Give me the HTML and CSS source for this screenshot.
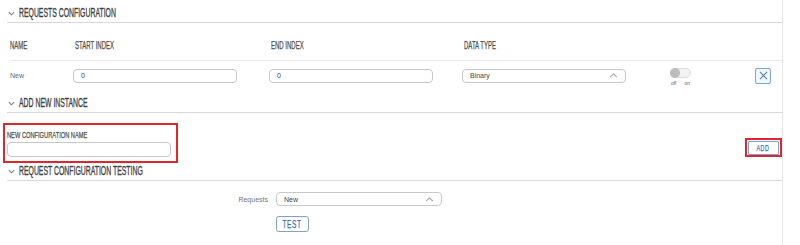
FILE: index.html
```html
<!DOCTYPE html>
<html lang="en">
<head>
    <meta charset="UTF-8">
    <title>Requests configuration</title>
    <link rel="stylesheet" href="styles.css">
</head>
<body>
    <div class="page">
        <div class="section-title">
            <svg class="chev" viewBox="0 0 8 5" width="7" height="5"><path d="M1 1l3 3 3-3" fill="none" stroke="#777" stroke-width="1.2"/></svg>
            <span class="cond">REQUESTS CONFIGURATION</span>
        </div>

        <div class="table">
            <div class="row head">
                <div class="cell first"><span class="cond">NAME</span></div>
                <div class="cell"><span class="cond">START INDEX</span></div>
                <div class="cell"><span class="cond">END INDEX</span></div>
                <div class="cell"><span class="cond">DATA TYPE</span></div>
                <div class="cell"></div>
                <div class="cell"></div>
            </div>
            <div class="row body">
                <div class="cell first name">New</div>
                <div class="cell"><input class="field" type="text" value="0"></div>
                <div class="cell"><input class="field" type="text" value="0"></div>
                <div class="cell">
                    <div class="select">
                        <span>Binary</span>
                        <svg viewBox="0 0 10 6" width="9" height="5"><path d="M1 5l4-4 4 4" fill="none" stroke="#aaa" stroke-width="1.3"/></svg>
                    </div>
                </div>
                <div class="cell">
                    <div class="toggle">
                        <div class="track"><div class="knob"></div></div>
                        <div class="toggle-labels"><span>off</span><span>on</span></div>
                    </div>
                </div>
                <div class="cell">
                    <button class="remove">
                        <svg viewBox="0 0 10 10" width="9" height="9"><path d="M1 1l8 8M9 1l-8 8" stroke="#4f84bd" stroke-width="1.2"/></svg>
                    </button>
                </div>
            </div>
        </div>

        <div class="section-title">
            <svg class="chev" viewBox="0 0 8 5" width="7" height="5"><path d="M1 1l3 3 3-3" fill="none" stroke="#777" stroke-width="1.2"/></svg>
            <span class="cond">ADD NEW INSTANCE</span>
        </div>

        <div class="add-row">
            <div class="new-name">
                <label for="newName"><span class="cond">NEW CONFIGURATION NAME</span></label>
                <input class="field" type="text" id="newName">
            </div>
            <div class="add-wrap">
                <button class="btn"><span class="cond mid">ADD</span></button>
            </div>
        </div>

        <div class="section-title">
            <svg class="chev" viewBox="0 0 8 5" width="7" height="5"><path d="M1 1l3 3 3-3" fill="none" stroke="#777" stroke-width="1.2"/></svg>
            <span class="cond">REQUEST CONFIGURATION TESTING</span>
        </div>

        <div class="test">
            <div class="test-line">
                <span class="test-label">Requests</span>
                <div class="select wide">
                    <span>New</span>
                    <svg viewBox="0 0 10 6" width="9" height="5"><path d="M1 5l4-4 4 4" fill="none" stroke="#aaa" stroke-width="1.3"/></svg>
                </div>
            </div>
            <div class="test-line">
                <span class="test-label"></span>
                <button class="btn test-btn"><span class="cond mid">TEST</span></button>
            </div>
        </div>
    </div>
</body>
</html>
```

FILE: styles.css
```css
body {
    margin: 0;
    background: #fff;
    font-family: "Liberation Sans", Arial, sans-serif;
    color: #555;
}
.page {
    width: 775px;
    height: 245px;
    padding-left: 7px;
    border-right: 1px solid #e6e6e6;
}
/* condensed look of the original heading font */
.cond {
    display: inline-block;
    white-space: nowrap;
    transform: scaleX(0.6);
    transform-origin: left center;
    -webkit-text-stroke: 0.25px currentColor;
}
.cond.mid {
    transform-origin: center center;
}
.section-title {
    box-sizing: border-box;
    height: 23px;
    padding-top: 3px;
    padding-left: 1px;
    display: flex;
    align-items: center;
    gap: 4px;
    border-bottom: 1px solid #d8d8d8;
    font-size: 12.5px;
    color: #3f3f3f;
}
.section-title .cond {
    transform: scaleX(0.55);
    -webkit-text-stroke: 0.35px currentColor;
}
.chev {
    margin-top: 1px;
}
.table {
    box-sizing: border-box;
    height: 67px;
    padding-top: 13px;
    padding-left: 3px;
}
.row {
    display: grid;
    grid-template-columns: 63px 196px 193px 208px 85px 30px;
    align-items: center;
}
.row.head {
    box-sizing: border-box;
    height: 25px;
    padding-bottom: 6px;
    border-bottom: 1px solid #ececec;
    font-size: 10px;
    color: #4d4d4d;
}
.row.head .cell {
    padding-left: 2px;
}
.row.head .cell.first {
    padding-left: 0;
}
.row.body {
    height: 29px;
    font-size: 7px;
}
.name {
    color: #666;
}
.field {
    box-sizing: border-box;
    width: 164px;
    height: 14px;
    border: 1px solid #c8c8c8;
    border-radius: 4px;
    padding: 0 7px;
    font-family: "Liberation Sans", sans-serif;
    font-size: 7px;
    color: #444;
    outline: none;
}
.select {
    box-sizing: border-box;
    width: 164px;
    height: 14px;
    border: 1px solid #c8c8c8;
    border-radius: 4px;
    padding: 0 7px;
    display: flex;
    align-items: center;
    justify-content: space-between;
    font-size: 7px;
    color: #444;
}
.select.wide {
    width: 166px;
}
.toggle {
    width: 22px;
    margin-top: 3px;
}
.track {
    position: relative;
    width: 19px;
    height: 8px;
    border-radius: 5px;
    background: #f3f3f3;
    border: 1px solid #ddd;
}
.knob {
    position: absolute;
    left: -1px;
    top: -1px;
    width: 10px;
    height: 10px;
    border-radius: 50%;
    background: #bdbdbd;
}
.toggle-labels {
    display: flex;
    justify-content: space-between;
    font-size: 5px;
    color: #666;
    padding: 2px 2px 0 1px;
}
.remove {
    box-sizing: border-box;
    width: 16px;
    height: 16px;
    border: 1px solid #7aa3cf;
    border-radius: 2px;
    background: #f4f8fc;
    padding: 0;
    display: flex;
    align-items: center;
    justify-content: center;
}
.add-row {
    box-sizing: border-box;
    height: 45px;
    padding-top: 10px;
    display: flex;
    justify-content: space-between;
    align-items: flex-start;
}
.new-name {
    box-sizing: border-box;
    width: 175px;
    height: 40px;
    margin-left: -4px;
    border: 2px solid #e0262b;
    padding: 5px 0 0 2px;
    display: flex;
    flex-direction: column;
    gap: 2px;
}
.new-name label {
    font-size: 9.5px;
    color: #4d4d4d;
    line-height: 10px;
}
.new-name .field {
    width: 164px;
    height: 15px;
}
.add-wrap {
    box-sizing: border-box;
    margin-top: 15px;
    width: 37px;
    height: 19px;
    border: 2px solid #e0262b;
    padding-left: 1px;
    display: flex;
    align-items: center;
}
.btn {
    box-sizing: border-box;
    border: 1px solid #7aa3cf;
    border-radius: 3px;
    background: #fff;
    color: #3f6fa5;
    font-family: "Liberation Sans", sans-serif;
    font-size: 9px;
    letter-spacing: 1px;
    padding: 0;
    display: flex;
    align-items: center;
    justify-content: center;
}
.add-wrap .btn {
    width: 31px;
    height: 14px;
    border-radius: 1px;
}
.test {
    padding-top: 11px;
}
.test-line {
    display: flex;
    align-items: center;
    gap: 8px;
    margin-bottom: 10px;
}
.test-label {
    width: 261px;
    text-align: right;
    font-size: 7px;
    color: #777;
}
.test-btn {
    width: 33px;
    height: 16px;
    font-size: 11px;
    border-radius: 3px;
}
```
